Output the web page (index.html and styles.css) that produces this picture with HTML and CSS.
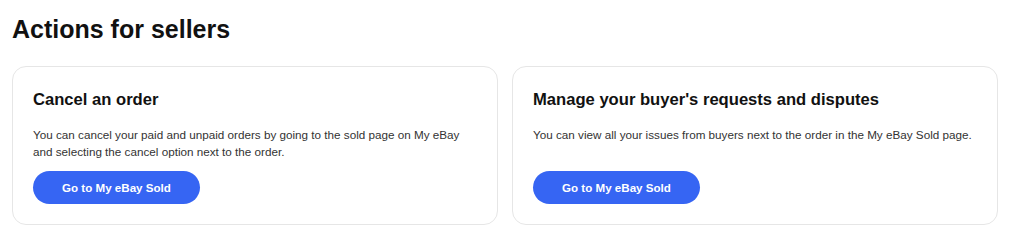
FILE: index.html
```html
<!DOCTYPE html>
<html lang="en">
<head>
    <meta charset="UTF-8">
    <meta name="viewport" content="width=device-width, initial-scale=1.0">
    <title>Actions for sellers</title>
    <link rel="stylesheet" href="styles.css">
</head>
<body>
    <div id="page">
        <h2 class="section-title">Actions for sellers</h2>
        <div class="cards">
            <div class="card">
                <h3>Cancel an order</h3>
                <p>You can cancel your paid and unpaid orders by going to the sold page on My eBay and selecting the cancel option next to the order.</p>
                <a class="btn" href="#">Go to My eBay Sold</a>
            </div>
            <div class="card">
                <h3>Manage your buyer's requests and disputes</h3>
                <p>You can view all your issues from buyers next to the order in the My eBay Sold page.</p>
                <a class="btn" href="#">Go to My eBay Sold</a>
            </div>
        </div>
    </div>
</body>
</html>
```

FILE: styles.css
```css
body {
    font-family: "Liberation Sans", Arial, sans-serif;
    background-color: #fff;
    color: #111;
    margin: 0;
}

#page {
    padding: 12px 26px 0 12px;
}

.section-title {
    font-size: 25px;
    line-height: 28px;
    font-weight: bold;
    margin: 3px 0 23px;
}

.cards {
    display: grid;
    grid-template-columns: 1fr 1fr;
    gap: 14px;
}

.card {
    display: flex;
    flex-direction: column;
    align-items: flex-start;
    border: 1px solid #e6e6e6;
    border-radius: 14px;
    padding: 23px 20px 20px;
}

.card h3 {
    font-size: 16.6px;
    line-height: 20px;
    margin: 0 0 16px;
}

.card p {
    font-size: 11.7px;
    line-height: 17px;
    color: #333;
    margin: 0 0 11px;
}

.btn {
    margin-top: auto;
    display: inline-block;
    height: 33px;
    line-height: 33px;
    padding: 0 29px;
    border-radius: 17px;
    background: #3665f3;
    color: #fff;
    font-size: 11.6px;
    font-weight: bold;
    text-decoration: none;
}
```
